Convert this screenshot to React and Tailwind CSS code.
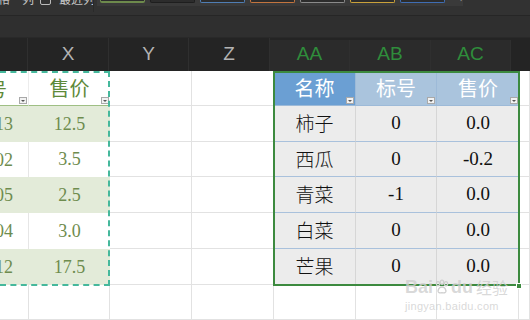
const SWATCHES = ['#6d8a4c', '#1e1e1e', '#4f7db3', '#c2743e', '#8a8a8a', '#c9a13a', '#3f6db3'];

const HEAD_COLS = [
    { w: 'w-[28px]', label: '' },
    { w: 'w-[81px]', label: 'X' },
    { w: 'w-[80px]', label: 'Y' },
    { w: 'w-[81px]', label: 'Z' },
    { w: 'w-[80px]', label: 'AA', sel: true },
    { w: 'w-[81px]', label: 'AB', sel: true },
    { w: 'w-[80px]', label: 'AC', sel: true },
];

const LEFT = [
    ['113', '12.5'],
    ['102', '3.5'],
    ['105', '2.5'],
    ['104', '3.0'],
    ['112', '17.5'],
];

const RIGHT = [
    ['柿子', '0', '0.0'],
    ['西瓜', '0', '-0.2'],
    ['青菜', '-1', '0.0'],
    ['白菜', '0', '0.0'],
    ['芒果', '0', '0.0'],
];

const ROW_H = ['h-[36px]', 'h-[35px]', 'h-[36px]', 'h-[36px]', 'h-[36px]'];

const cjk = "font-['Noto_Sans_CJK_SC',sans-serif]";
const serif = "font-['Liberation_Serif','Noto_Sans_CJK_SC',serif]";

function FilterBtn() {
    return (
        <span className="absolute bottom-[1px] right-[1px] w-[8px] h-[7px] bg-[#f2f2f2] border border-[#a9a9a9] flex items-center justify-center">
            <span className="w-0 h-0 border-l-[2px] border-r-[2px] border-t-[2px] border-l-transparent border-r-transparent border-t-[#555]" />
        </span>
    );
}

function Blank({ w, last }) {
    return <div className={`${w} h-full shrink-0 border-b border-r border-[#e2e2e2] ${last ? 'flex-1' : ''}`} />;
}

function Paw() {
    return (
        <svg width="16" height="18" viewBox="0 0 20 20" className="mx-[1px]">
            <g fill="none" stroke="#cfcfcf" strokeWidth="1.6">
                <ellipse cx="5" cy="6" rx="2" ry="2.6" />
                <ellipse cx="10" cy="4" rx="2" ry="2.6" />
                <ellipse cx="15" cy="6" rx="2" ry="2.6" />
                <path d="M5 15 Q6 10 10 10 Q14 10 15 15 Q15 18 10 17 Q5 18 5 15 Z" />
            </g>
        </svg>
    );
}

export default function App() {
    return (
        <div className="w-[530px] h-[320px] overflow-hidden relative bg-white">
            {/* toolbar */}
            <div className="h-[15px] bg-[#323232] flex items-start overflow-hidden">
                <div className={`w-[93px] h-[15px] overflow-hidden relative text-[12px] text-[#c4c4c4] ${cjk}`}>
                    <div className="absolute -top-[10px] left-0 flex items-center whitespace-nowrap">
                        <span className="-ml-[2px]">格</span>
                        <span className="ml-[12px]">列</span>
                        <span className="ml-[6px] w-[11px] h-[11px] border border-[#bbb] rounded-[2px]" />
                        <span className="ml-[8px]">最近列</span>
                    </div>
                </div>
                <div className="w-px h-[12px] bg-[#2a2a2a]" />
                <div className="ml-[3px] w-[366px] h-[6px] bg-[#3a3a3a] flex items-start pl-[3px] gap-[5px]">
                    {SWATCHES.map((c, i) => (
                        <div
                            key={i}
                            className={`w-[45px] h-[3px] bg-[#2c2c2c] border-x border-b rounded-b-[2px] ${i === 0 ? 'border-b-2' : ''}`}
                            style={{ borderColor: c }}
                        />
                    ))}
                    <span className="ml-[10px] -mt-[3px] text-[8px] leading-none text-[#999]">·</span>
                </div>
            </div>
            <div className="h-px bg-[#262626]" />
            {/* formula bar */}
            <div className="h-[22px] bg-[#2f2f2f] border-b border-[#292929]" />
            {/* column headers */}
            <div className="h-[33px] bg-[#242424] flex">
                {HEAD_COLS.map((c, i) => (
                    <div
                        key={i}
                        className={`${c.w} shrink-0 border-r border-[#2f2f2f] flex items-end justify-center pb-[8px] font-['Liberation_Sans',sans-serif] text-[19px] leading-none ${
                            c.sel ? 'bg-[#2b2b2b] text-[#2f8d3b] mt-[2px]' : 'text-[#b3b3b3]'
                        }`}
                    >
                        {c.label}
                    </div>
                ))}
                <div className="flex-1" />
            </div>

            {/* body */}
            <div className="flex flex-col">
                {/* header row */}
                <div className="h-[35px] flex">
                    <div className={`w-[29px] shrink-0 relative overflow-hidden border-b border-r border-b-[#9fbf84] border-r-[#ececec] text-[19px] text-[#5e8a3a] ${cjk}`}>
                        <span className="absolute right-[21px] top-[4px] whitespace-nowrap">标号</span>
                        <FilterBtn />
                    </div>
                    <div className={`w-[81px] shrink-0 relative border-b border-b-[#9fbf84] flex items-center justify-center text-[20px] text-[#5e8a3a] ${cjk}`}>
                        售价
                        <FilterBtn />
                    </div>
                    <Blank w="w-[82px]" />
                    <Blank w="w-[82px]" />
                    <div className={`w-[82px] shrink-0 relative bg-[#6b9fd3] border-b border-r border-[#9dbad8] flex items-center justify-center text-[20px] text-white ${cjk}`}>
                        名称
                        <FilterBtn />
                    </div>
                    <div className={`w-[81px] shrink-0 relative bg-[#aac4dd] border-b border-r border-[#9dbad8] flex items-center justify-center text-[20px] text-white ${cjk}`}>
                        标号
                        <FilterBtn />
                    </div>
                    <div className={`w-[82px] shrink-0 relative bg-[#aac4dd] border-b border-[#9dbad8] flex items-center justify-center text-[20px] text-white ${cjk}`}>
                        售价
                        <FilterBtn />
                    </div>
                    <Blank w="w-[11px]" last />
                </div>

                {LEFT.map((l, i) => {
                    const r = RIGHT[i];
                    const green = i % 2 === 0;
                    const lbg = green ? 'bg-[#e3ebd9] border-[#e3ebd9]' : 'bg-white border-[#e6e6e6]';
                    return (
                        <div key={i} className={`${ROW_H[i]} flex`}>
                            <div className={`w-[29px] shrink-0 relative overflow-hidden border-r ${lbg} text-[18px] text-[#6e8c4e] ${serif}`}>
                                <span className="absolute right-[15px] top-1/2 -translate-y-1/2 leading-none">{l[0]}</span>
                            </div>
                            <div className={`w-[81px] shrink-0 flex items-center justify-center ${lbg} text-[18px] text-[#6e8c4e] ${serif}`}>
                                {l[1]}
                            </div>
                            <Blank w="w-[82px]" />
                            <Blank w="w-[82px]" />
                            <div className={`w-[82px] shrink-0 bg-[#ececec] border-b border-r border-b-[#a9c1dc] border-r-[#d6d6d6] flex items-center justify-center text-[19px] text-[#111] ${cjk} font-light`}>
                                {r[0]}
                            </div>
                            <div className={`w-[81px] shrink-0 bg-[#ececec] border-b border-r border-b-[#a9c1dc] border-r-[#d6d6d6] flex items-center justify-center text-[19px] text-[#111] ${serif}`}>
                                {r[1]}
                            </div>
                            <div className={`w-[82px] shrink-0 bg-[#ececec] border-b border-b-[#a9c1dc] flex items-center justify-center text-[19px] text-[#111] ${serif}`}>
                                {r[2]}
                            </div>
                            <Blank w="w-[11px]" last />
                        </div>
                    );
                })}

                {/* empty row */}
                <div className="h-[35px] flex">
                    <Blank w="w-[29px]" />
                    <Blank w="w-[81px]" />
                    <Blank w="w-[82px]" />
                    <Blank w="w-[82px]" />
                    <Blank w="w-[82px]" />
                    <Blank w="w-[81px]" />
                    <Blank w="w-[82px]" />
                    <Blank w="w-[11px]" last />
                </div>
            </div>

            {/* copy marquee around left table */}
            <div className="absolute left-0 top-[71px] w-[110px] h-[215px] border-2 border-l-0 border-dashed border-[#45b89c] pointer-events-none" />

            {/* table selection */}
            <div className="absolute left-[273px] top-[71px] w-[247px] h-[215px] border-2 border-[#3c8a3f] pointer-events-none" />
            <div className="absolute left-[516px] top-[283px] w-[6px] h-[6px] bg-[#3c8a3f] border border-white" />

            {/* watermark */}
            <div className="absolute left-[405px] top-[278px] flex flex-col items-start whitespace-nowrap pointer-events-none text-[#cfcfcf]/80">
                <div className="flex items-center text-[18px] leading-none font-['Liberation_Sans',sans-serif] font-bold">
                    Bai
                    <Paw />
                    du
                    <span className={`ml-[3px] text-[16px] font-normal ${cjk}`}>经验</span>
                </div>
                <div className="mt-[5px] text-[11px] leading-none font-['Liberation_Sans',sans-serif] tracking-[0.3px]">jingyan.baidu.com</div>
            </div>
        </div>
    );
}
